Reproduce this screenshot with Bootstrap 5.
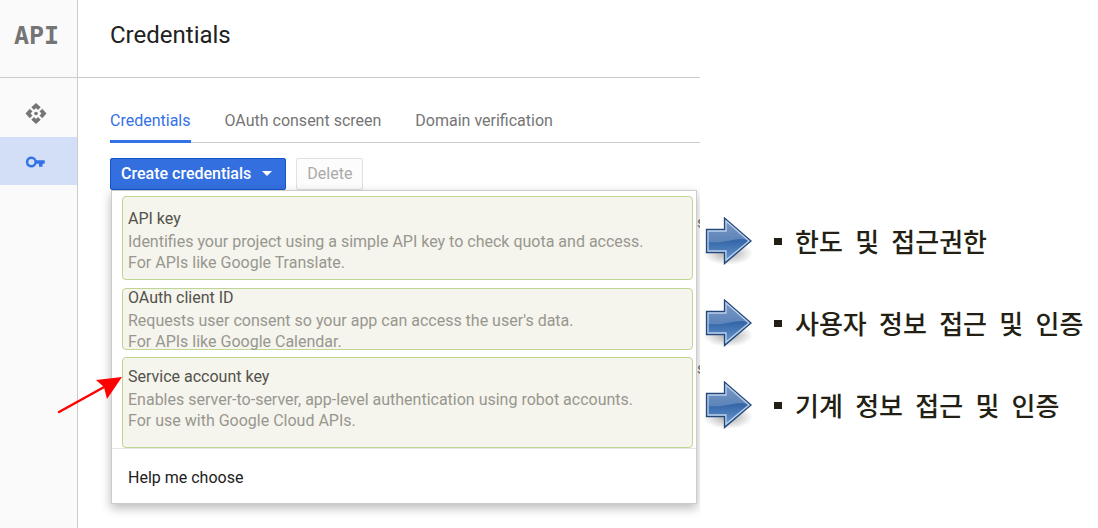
<!DOCTYPE html>
<html lang="ko">
<head>
<meta charset="utf-8">
<meta name="viewport" content="width=device-width, initial-scale=1">
<title>Credentials</title>
<link href="https://cdn.jsdelivr.net/npm/bootstrap@5.3.0/dist/css/bootstrap.min.css" rel="stylesheet">
<style>
body{font-family:Roboto,sans-serif;font-size:16px;line-height:22px;color:#212121;background:#fff}
.layout{display:grid;grid-template-columns:78px minmax(0,1fr) 398px;min-height:100vh}
.side{background:#fafafa;border-right:1px solid #ccc}
.brand,.page-head{height:78px;border-bottom:1px solid #ccc}
.brand{font:bold 25px/30px "DejaVu Sans Mono",monospace;color:#757575;padding:21px 4px 0 0;text-align:center;display:block;text-decoration:none}
.side-link{height:48px;color:#757575;padding-right:6px}
.side-link.active{background:#d3dff7;color:#3371e8}
.side-first{margin-top:11px}
.page-head h1{font-size:24px;line-height:32px;font-weight:400;margin:0}
.content-pad{padding-left:32px}
.tab-row{gap:34px;border-bottom:1px solid #ccc;height:37px;margin-top:28px}
.tab-row a{color:#757575;text-decoration:none;height:37px;padding-top:4px}
.tab-row a.active{color:#3371e8;border-bottom:3px solid #3371e8}
.tools{margin-top:15px;gap:10px}
.tool{font-size:16px;line-height:22px;height:32px;padding:4px 10px;border-radius:2px;font-weight:500}
.tool-create{background:#346fdf;border:1px solid #1255cc;color:#fff}
.tool-delete,.tool-delete:disabled{background:#fcfcfc;border:1px solid #e0e0e0;color:#aaa;opacity:1;font-weight:400}
.sheet{background:#fff;border:1px solid #ccc;margin:0 3px 0 1px;box-shadow:0 4px 10px rgba(0,0,0,.28);padding-top:5px}
.choice{text-align:left;line-height:21px;background:#f5f4ed;border:1px solid #bdd694;border-radius:4px;padding:0 5px;margin:0 3px 0 10px;color:#98978f}
.choice strong{display:block;line-height:24px;font-weight:400;color:#53524b}
.choice-api{height:84px;padding-top:10px;margin-bottom:8px}
.choice-oauth{height:62px;margin-bottom:7px}
.choice-service{height:91px;padding-top:7px}
.help{border:0;border-top:1px solid #e5e5e5;background:#fff;height:55px;text-align:left;padding:3px 16px 0;color:#212121}
.pointer{position:absolute;right:100%;top:18px;margin-right:-12px;width:68px;height:40px}
.behind{position:absolute;right:0;width:3px;overflow:hidden;color:#757575}
.behind-top{top:22px}
.behind-low{top:168px}
.notes{background:#fff;z-index:1;padding:217px 0 0 4px;gap:34px;font:500 26px/48px "Noto Sans CJK KR",sans-serif;color:#231f15}
.notes li{height:48px}
.notes span{margin-right:5px}
.dot{width:8px;height:7px;background:#231f15;margin:0 13px 0 20px}
</style>
</head>
<body>
<svg width="0" height="0" class="position-absolute" aria-hidden="true">
<defs>
<linearGradient id="arrowFill" x1="0" y1="0" x2="0" y2="1"><stop offset="0" stop-color="#5f83b8"/><stop offset=".5" stop-color="#3566a8"/><stop offset="1" stop-color="#6d9fd4"/></linearGradient>
<radialGradient id="arrowShade"><stop offset="0" stop-color="#000" stop-opacity=".35"/><stop offset="1" stop-color="#000" stop-opacity="0"/></radialGradient>
<symbol id="arrow" viewBox="0 0 50 50">
<ellipse cx="24" cy="36" rx="25" ry="12" fill="url(#arrowShade)"/>
<path d="M2.500 12.500H20.500V1L47 24L20.500 46.500V35.500H2.500Z" fill="url(#arrowFill)" stroke="#24477c" stroke-width="1.300"/>
<path d="M4 14H22V4L45 24C34 18 25 27 4 25Z" fill="#fff" opacity=".2"/>
<path d="M4 14H22V4L45 24L22 43V34H4Z" fill="none" stroke="#bcd0e9" stroke-width="1.300"/>
</symbol>
</defs>
</svg>
<div class="layout">
<nav class="side" aria-label="Main">
<a class="brand" href="#">API</a>
<a class="side-link side-first d-flex align-items-center justify-content-center" href="#" aria-label="Dashboard">
<svg width="24" height="24" viewBox="0 0 24 24" fill="currentColor"><circle cx="12" cy="12.500" r="1.800"/><path d="M12 7l2 2 2.700-2.700L12 2 7.300 6.300 10 9zM6.500 12.500l2-2-2.700-2.700L1.500 12.500l4.300 4.700 2.700-2.700zM17.500 12.500l-2 2 2.700 2.700 4.300-4.700-4.300-4.700-2.700 2.700zM12 18l-2-2-2.700 2.700L12 23l4.700-4.300L14 16z"/></svg></a>
<a class="side-link active d-flex align-items-center justify-content-center" href="#" aria-label="Credentials">
<svg width="21" height="21" viewBox="0 0 24 24" fill="currentColor"><path fill-rule="evenodd" d="M13.200 10.500a6.300 6.300 0 1 0 0 4H16v3.500h4v-3.500h2.500v-4zM7.300 16a3.500 3.500 0 1 1 0-7 3.500 3.500 0 0 1 0 7z"/></svg></a>
</nav>
<main>
<header class="page-head content-pad d-flex align-items-center pb-2"><h1>Credentials</h1></header>
<div class="content-pad">
<nav class="tab-row d-flex" aria-label="Sections">
<a class="active" href="#">Credentials</a><a href="#">OAuth consent screen</a><a href="#">Domain verification</a>
</nav>
<div class="tools d-flex">
<button class="tool tool-create d-flex align-items-center" type="button" aria-expanded="true">Create credentials<svg class="ms-2" width="16" height="6" viewBox="0 0 16 6"><path d="M3 0h10L8 5z" fill="#fff"/></svg></button>
<button class="tool tool-delete" type="button" disabled>Delete</button>
</div>
<div class="position-relative">
<span class="behind behind-top">s</span><span class="behind behind-low">s</span>
<div class="sheet position-relative d-flex flex-column">
<button class="choice choice-api d-flex flex-column" type="button"><strong>API key</strong><span>Identifies your project using a simple API key to check quota and access.<br>For APIs like Google Translate.</span></button>
<button class="choice choice-oauth d-flex flex-column justify-content-center" type="button"><strong>OAuth client ID</strong><span>Requests user consent so your app can access the user's data.<br>For APIs like Google Calendar.</span></button>
<div class="position-relative d-flex flex-column">
<button class="choice choice-service d-flex flex-column" type="button"><strong>Service account key</strong><span>Enables server-to-server, app-level authentication using robot accounts.<br>For use with Google Cloud APIs.</span></button>
<svg class="pointer" viewBox="0 0 68 40" aria-hidden="true"><path d="M3 37L50 11" stroke="#f00" stroke-width="2.500" stroke-linecap="round"/><path d="M66 2L51 24L48 12L40 5Z" fill="#f00"/></svg>
</div>
<button class="help" type="button">Help me choose</button>
</div>
</div>
</div>
</main>
<ul class="notes list-unstyled d-flex flex-column m-0">
<li class="d-flex align-items-center"><svg width="50" height="48" viewBox="0 0 50 48"><use href="#arrow" width="50" height="50"/></svg><i class="dot"></i><div><span>한도</span> <span>및</span> 접근권한</div></li>
<li class="d-flex align-items-center"><svg width="50" height="48" viewBox="0 0 50 48"><use href="#arrow" width="50" height="50"/></svg><i class="dot"></i><div><span>사용자</span> <span>정보</span> <span>접근</span> <span>및</span> 인증</div></li>
<li class="d-flex align-items-center"><svg width="50" height="48" viewBox="0 0 50 48"><use href="#arrow" width="50" height="50"/></svg><i class="dot"></i><div><span>기계</span> <span>정보</span> <span>접근</span> <span>및</span> 인증</div></li>
</ul>
</div>
<script src="https://cdn.jsdelivr.net/npm/bootstrap@5.3.0/dist/js/bootstrap.bundle.min.js"></script>
</body>
</html>
